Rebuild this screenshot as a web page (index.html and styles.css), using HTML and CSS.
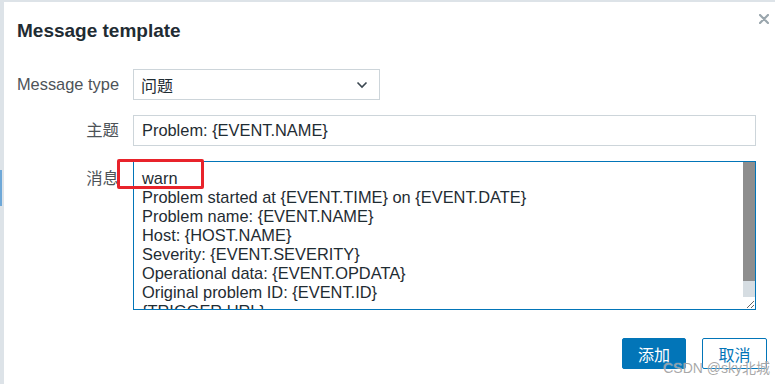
FILE: index.html
```html
<!DOCTYPE html>
<html lang="en">
<head>
<meta charset="utf-8">
<title>Message template</title>
<link rel="stylesheet" href="styles.css">
</head>
<body>
<div class="edge">
    <div class="edge-mark"></div>
</div>
<div class="dialog">
    <header class="dialog-head">
        <h1>Message template</h1>
        <button class="close" type="button" aria-label="Close">
            <svg width="10" height="10" viewBox="0 0 10 10"><path d="M1 1L9 9M9 1L1 9" stroke="#9aa6ad" stroke-width="2.2" stroke-linecap="round"/></svg>
        </button>
    </header>
    <form class="form" action="#">
        <label class="label">Message type</label>
        <div class="select">
            <span>问题</span>
            <svg width="12" height="8" viewBox="0 0 12 8"><path d="M1.5 1.5L6 6L10.5 1.5" fill="none" stroke="#3b4750" stroke-width="1.6"/></svg>
        </div>

        <label class="label">主题</label>
        <input class="input" type="text" value="Problem: {EVENT.NAME}">

        <label class="label label-top">消息</label>
        <div class="area-wrap">
            <textarea class="area">warn
Problem started at {EVENT.TIME} on {EVENT.DATE}
Problem name: {EVENT.NAME}
Host: {HOST.NAME}
Severity: {EVENT.SEVERITY}
Operational data: {EVENT.OPDATA}
Original problem ID: {EVENT.ID}
{TRIGGER.URL}</textarea>
            <div class="scroll"><div class="scroll-thumb"></div></div>
            <div class="mark"></div>
        </div>
    </form>
    <footer class="dialog-foot">
        <button class="btn btn-primary" type="button">添加</button>
        <button class="btn btn-alt" type="button">取消</button>
        <span class="watermark">CSDN @sky北城</span>
    </footer>
</div>
</body>
</html>
```

FILE: styles.css
```css
* {
    margin: 0;
    padding: 0;
    box-sizing: border-box;
    font-family: "Liberation Sans", "Noto Sans CJK SC", sans-serif;
}

body {
    display: flex;
    height: 384px;
    overflow: hidden;
    background: #dde3e8;
}

.edge {
    width: 4px;
    display: flex;
    flex-direction: column;
    padding-top: 170px;
}

.edge-mark {
    width: 2px;
    height: 36px;
    background: #6ea8d8;
}

.dialog {
    flex: 1;
    margin-top: 2px;
    background: #fff;
    display: flex;
    flex-direction: column;
}

.dialog-head {
    display: flex;
    justify-content: space-between;
    align-items: flex-start;
    padding: 18px 5px 0 13px;
}

.dialog-head h1 {
    font-size: 19px;
    line-height: 22px;
    font-weight: bold;
    color: #1f2c33;
}

.close {
    border: none;
    background: none;
    margin-top: -7px;
    width: 12px;
    height: 12px;
    display: flex;
    align-items: center;
    justify-content: center;
}

.form {
    display: grid;
    grid-template-columns: 109px 1fr;
    column-gap: 14px;
    row-gap: 15px;
    padding: 27px 19px 0 6px;
}

.label {
    font-size: 16.4px;
    line-height: 19px;
    color: #4d5358;
    text-align: right;
    align-self: center;
    white-space: nowrap;
}

.label-top {
    align-self: start;
    padding-top: 8px;
}

.select {
    width: 247px;
    height: 31px;
    border: 1px solid #cdd5da;
    display: flex;
    align-items: center;
    justify-content: space-between;
    padding: 0 11px 0 7px;
    font-size: 16px;
    color: #1f2c33;
}

.input {
    height: 31px;
    border: 1px solid #cdd5da;
    padding: 0 8px;
    font-size: 16.4px;
    color: #1f2c33;
    outline: none;
}

.area-wrap {
    position: relative;
    display: flex;
}

.area {
    width: 100%;
    height: 149px;
    border: 1px solid #0275b8;
    padding: 7px 20px 7px 8px;
    font-size: 16.4px;
    line-height: 19px;
    color: #1f2c33;
    outline: none;
    resize: vertical;
    overflow: hidden;
}

.scroll {
    position: absolute;
    top: 1px;
    right: 1px;
    bottom: 13px;
    width: 12px;
    background: #d6dde2;
}

.scroll-thumb {
    height: 119px;
    background: #8e8e8e;
}

.mark {
    position: absolute;
    left: -16px;
    top: -2px;
    width: 87px;
    height: 30px;
    border: 3px solid #e8232b;
    border-radius: 2px;
}

.dialog-foot {
    position: relative;
    display: flex;
    justify-content: flex-end;
    gap: 16px;
    padding: 28px 8px 0 0;
}

.btn {
    height: 31px;
    width: 64px;
    font-size: 16px;
    border-radius: 2px;
    cursor: pointer;
}

.btn-primary {
    background: #0275b8;
    border: 1px solid #0275b8;
    color: #fff;
}

.btn-alt {
    width: 65px;
    background: #fff;
    border: 1px solid #0275b8;
    color: #0275b8;
}

.watermark {
    position: absolute;
    right: 5px;
    top: 47px;
    font-size: 14px;
    color: rgba(110, 110, 110, 0.6);
    text-shadow: 0 0 1px #fff;
    white-space: nowrap;
}
```
